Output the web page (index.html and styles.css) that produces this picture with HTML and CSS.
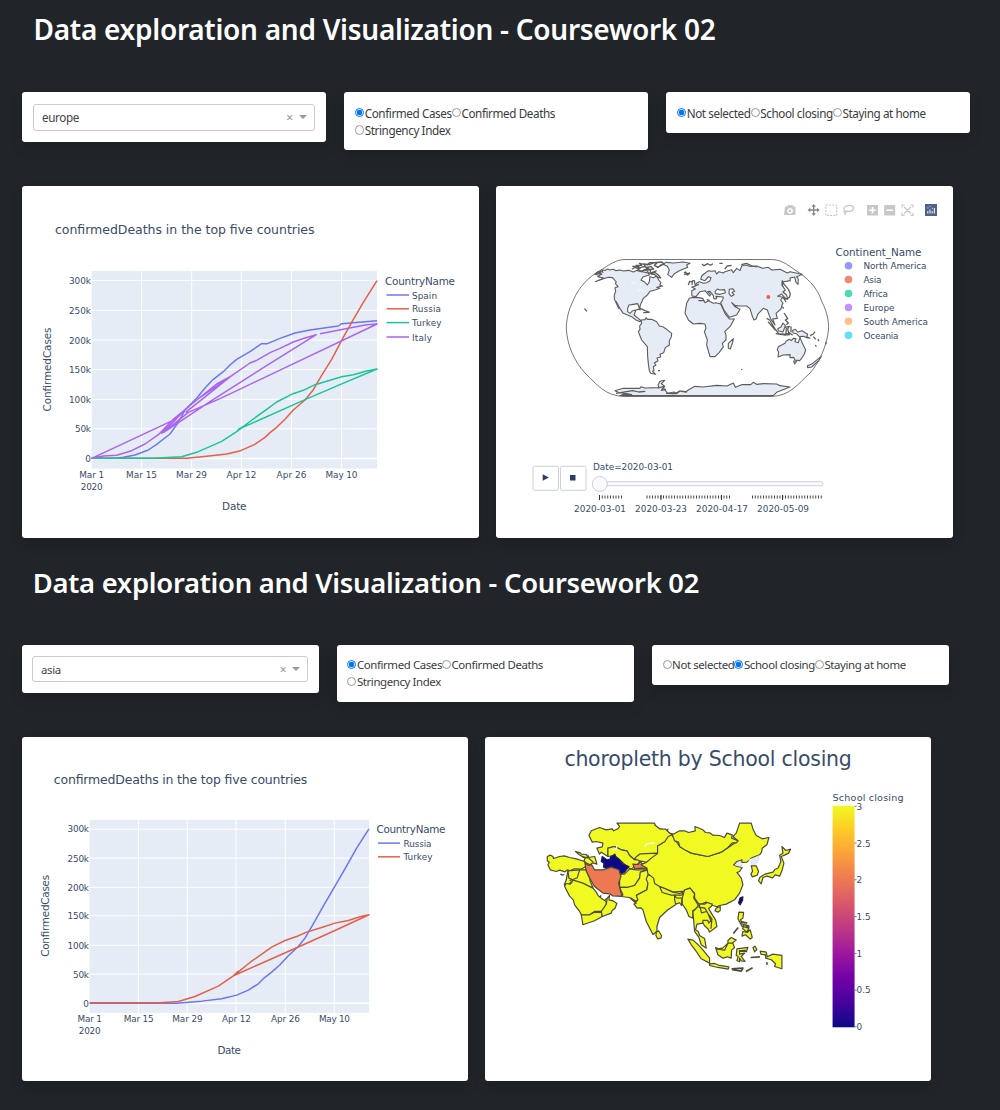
FILE: index.html
```html
<!DOCTYPE html>
<html lang="en">
<head>
<meta charset="utf-8">
<title>Data exploration and Visualization</title>
<link rel="stylesheet" href="styles.css">
</head>
<body>
<section class="dashboard">
  <h1 class="heading">Data exploration and Visualization - Coursework 02</h1>
  <div class="controls">
    <div class="card"><div class="select"><span class="value">europe</span><span class="clear">×</span><span class="arrow"></span></div></div>
    <div class="card options">
      <label><input type="radio" name="m1" checked><span>Confirmed Cases</span></label><label><input type="radio" name="m1"><span>Confirmed Deaths</span></label><label><input type="radio" name="m1"><span>Stringency Index</span></label>
    </div>
    <div class="card options">
      <label><input type="radio" name="p1" checked><span>Not selected</span></label><label><input type="radio" name="p1"><span>School closing</span></label><label><input type="radio" name="p1"><span>Staying at home</span></label>
    </div>
  </div>
  <div class="graphs">
    <div class="card graph">
      <svg viewBox="22 186 456.5 352">
        <rect class="plot" x="91.7" y="271" width="285.3" height="197.5"/>
        <path class="grid" d="M141.5 271V468M191.7 271V468M241.3 271V468M291.5 271V468M341.5 271V468M92 280.5H377M92 310.3H377M92 340H377M92 369.5H377M92 399.3H377M92 428.8H377"/>
        <path class="zero" d="M92 458.5H377"/>
        <g class="series" transform="translate(20 180) scale(.33333)">
          <path class="blue" d="M215 835H285L310 832 345 825 385 810 410 793 450 762 475 727 495 690 530 655 555 624 580 598 610 575 630 555 650 538 690 515 725 491 742 491 780 475 825 459 870 450 955 438 965 431 1000 428 1071 422"/>
          <path class="red" d="M215 835H500L560 829 620 822 662 812 703 794 735 772 750 758 770 742 795 718 820 690 855 660 880 629 905 586 935 538 965 481 995 427 1030 367 1071 302"/>
          <path class="green" d="M215 835H400L485 830 535 815 605 784 650 755 700 717 740 688 770 666 815 643 850 631 885 614 925 602 965 590 1000 584 1040 573 1071 567 960 614 855 659 655 748 670 739"/>
          <path class="purple" d="M215 835 470 716 425 760 495 690M430 758 505 697 600 656 1071 432 1040 434 985 445 900 461M215 835 250 828 290 826 335 812 375 792 415 764 460 718 530 660 590 612 632 589 497 697M530 660 632 589 690 549 710 541 750 518 780 505 820 486 855 474 889 464 735 560 570 665 430 758"/>
        </g>
        <g class="tick end">
          <text x="91" y="284" textLength="22">300k</text><text x="91" y="314" textLength="22">250k</text><text x="91" y="343.5" textLength="22">200k</text><text x="91" y="373" textLength="22">150k</text><text x="91" y="403" textLength="22">100k</text><text x="91" y="432" textLength="16">50k</text><text x="91" y="462">0</text>
        </g>
        <g class="tick mid">
          <text x="91.7" y="478" textLength="25">Mar 1</text><text x="91.7" y="490" textLength="22">2020</text><text x="141.5" y="478" textLength="31">Mar 15</text><text x="191.5" y="478" textLength="31">Mar 29</text><text x="241.5" y="478" textLength="30">Apr 12</text><text x="291.5" y="478" textLength="30">Apr 26</text><text x="341.500" y="478" textLength="32">May 10</text>
        </g>
        <text class="title" x="55" y="234.3" textLength="259.5">confirmedDeaths in the top five countries</text>
        <text class="axis" x="222" y="510" textLength="24.5">Date</text>
        <text class="axis" transform="translate(50.500 411.5) rotate(-90)" textLength="84">ConfirmedCases</text>
        <text class="axis" x="385" y="285" textLength="70">CountryName</text>
        <g class="series"><path class="blue" d="M386.5 295H409"/><path class="red" d="M386.5 308.8H409"/><path class="green" d="M386.5 322.6H409"/><path class="purple" d="M386.5 337H409"/></g>
        <g class="tick"><text x="412" y="298.5" textLength="25">Spain</text><text x="412" y="312.3" textLength="29">Russia</text><text x="412" y="326" textLength="29.5">Turkey</text><text x="412" y="340.5" textLength="20">Italy</text></g>
      </svg>
    </div>
    <div class="card graph">
      <svg viewBox="496 186 456.5 352">
        <g class="tools">
          <path fill-rule="evenodd" d="M785 206.5h2l1-1.5h4.5l1 1.5h2v8.5h-11.500zM790 208a2.900 2.900 0 1 0 .1 0zM790 209.500a1.400 1.400 0 1 1-.1 0z"/>
          <path class="active" d="M813.700 204l2.200 2.700h-1.500v2.600h2.700v-1.500l2.700 2.200-2.700 2.200v-1.500h-2.700v2.600h1.500l-2.200 2.700-2.200-2.700h1.500v-2.600h-2.700v1.500l-2.700-2.200 2.700-2.200v1.500h2.700v-2.600h-1.500z"/>
          <path class="line" stroke-dasharray="2 1.200" d="M825.800 205h10.800v10.300h-10.800z"/>
          <path class="line" d="M845 210.500c-3-2 0-5.200 4.500-5.200s5.500 4.500 1.500 5.800c-3 .9-5-.6-6.500.2-1.500 1 .8 2.400 1.700 1 .5-1-.5-1.500-1.200-1.800m.5 2.500c0 1-.4 1.500-1 2"/>
          <path fill-rule="evenodd" d="M867 205h11v10.500h-11zM871.700 207v2.500h-2.500v1.600h2.500v2.500h1.600v-2.500h2.500v-1.600h-2.500V207z"/>
          <path fill-rule="evenodd" d="M884.200 205h11v10.500h-11zM886.500 209.500v1.600h6.500v-1.600z"/>
          <path class="line" d="M902 207.500v-2.500h2.500M910.500 205h2.500v2.500M913 212.800v2.500h-2.500M904.500 215.300H902v-2.500M904 207l7 6.500M911 207l-7 6.500"/>
          <path class="logo" d="M925 204h12v12h-12z"/><path class="bars" d="M927.800 213.500v-2.500M930 213.500v-4M932.200 213.500v-2.500M934.400 213.500v-5.500M927.500 207.800h.8M929.600 206.500h.8M931.900 208.300h.8"/>
        </g>
        <path class="frame" d="M625 259.500H771.700C780 259.500 787 264 795 270C806 277 817 286 822 302C827 312 828.700 320 828.600 329C827 346 819 363 810 373C798 384 790 396 771 396.500H625C604 396 597 384 585 373C575 362 567 346 566.300 328C566.300 319 569 309 573 301C579 286 590 276 601 270C609 265 616 259.500 625 259.500Z"/>
        <g class="land" transform="translate(560 250) scale(.33333)">
          <path d="M105 72 115 65 112 70 122 73 119 64 129 67 125 60 136 61 143 57 150 60 160 58 168 62 180 60 190 63 206 61 220 66 231 61 246 66 252 60 262 62 268 75 250 80 243 90 255 97 262 105 268 95 270 80 280 83 290 78 296 90 303 98 299 105 308 108 290 112 300 115 285 120 270 124 262 135 250 145 244 158 240 168 240 180 233 161 220 163 207 165 203 175 203 185 210 190 218 182 228 180 222 195 235 205 243 213 240 215 228 210 215 200 190 190 180 176 169 155 176 175 163 147 163 135 167 124 165 113 174 110 166 100 169 96 158 83 145 82 128 87 106 95 131 84 113 80 120 77Z"/>
          <path d="M243 210 255 209 259 203 262 208 275 208 290 215 298 228 308 230 320 238 335 250 334 260 328 272 328 285 316 293 311 308 300 313 302 321 291 324 294 332 283 339 288 345 280 350 282 362 278 364 287 373 272 370 268 362 265 340 263 320 262 290 245 270 235 245 240 238 239 228 245 220Z"/>
          <path d="M307 42 320 37 340 39 370 36 390 40 380 45 383 52 358 62 342 72 335 82 323 74 328 60 322 49Z"/>
          <path class="coast" d="M216 58 225 52 240 55 232 62 246 63 256 58 272 61 270 70 284 67 295 75 302 84 293 82 284 73 272 72M217 49h20l-6 7 20-6 15 3-8 6 23-2-9-8-13 5-8-12 17 2 17-7M227 46h18l-7-6 24 5 7-7 25-1-11 9 12 6 10-9M250 66l20 4 20-8M277 39l28-3 8 6-23 11M372 70l4-4 5 5 8-2-6 6-6-3-4 3M228 180l14-4 13 6 14 5M250 188l19-1M294 362h6M73 176l8 8M105 74l10-9 10 8-8-3 6-10"/>
          <path d="M165 422 190 415 240 415 243 410 255 414 297 413 294 405 300 394 314 391 304 401 313 408 311 415 323 430 342 426 350 431 359 423 377 425 390 417 405 409 430 411 470 406 501 408 520 399 526 412 545 404 572 404 580 397 590 403 610 401 650 402 660 407 690 411 650 427 640 437H180L190 433 215 434 174 427Z"/>
          <path class="coast" d="M168 430l50-8 18 4 20-2M293 414l20-5-9 12 14-3M318 430l26 1 17-8M364 424l17 2"/>
        </g>
        <g class="land" transform="translate(690 250) scale(.33333)">
          <path d="M-2 145-10 160-15 190-8 203-5 210 10 222 30 220 45 222 48 235 43 245 52 270 50 285 60 320 75 320 88 307 100 290 97 280 108 270 108 255 104 245 120 230 133 207 118 207 105 190 92 162 78 158 70 160 55 152 45 158 38 145 20 142 5 143Z"/>
          <path d="M5 122 6 138 18 140 30 125 45 122 58 138 62 134 53 125 60 124 70 137 72 147 80 146 78 139 100 141 98 150 92 158 102 180 118 202 140 195 150 178 135 170 125 158 136 167 150 168 170 168 180 176 187 199 192 210 199 206 203 193 220 175 232 180 238 197 242 207 255 225 248 207 262 205 258 190 273 177 275 168 279 160 272 150 279 142 263 139 275 132 286 145 293 148 290 135 279 126 286 120 276 106 276 96 301 92 300 84 314 81 318 97 324 103 325 88 320 80 337 73 300 65 292 69 270 58 245 60 235 52 218 55 200 48 180 49 165 45 155 48 150 62 140 55 130 68 125 59 105 65 100 69 87 65 80 72 75 62 65 64 55 62 42 72 35 78 32 88 45 92 55 80 63 83 60 92 50 98 40 100 28 95 20 100 15 109 5 111 16 117Z"/>
          <path class="water" d="M75 125 82 117 89 120 104 119 106 128 90 133 76 131ZM118 118 128 116 134 124 126 127 132 134 124 139 117 131Z"/>
          <path d="M265 290 285 280 288 274 298 268 304 272 310 265 318 266 315 275 325 278 330 262 337 280 347 300 343 312 335 325 329 332 315 330 311 322 300 323 300 314 280 315 264 321 266 306 262 300Z"/>
          <path d="M115 280 130 266 128 277 121 297 115 295ZM263 236l10-5 6-12 7 8-7 19-13-3ZM308 241l8-3 7 8 13-4 17 11-3 7 10 5-10-2-9-4-13 1-9-9-10-2ZM311 333h9l-6 9ZM352 347l12-4 15-12 15-12-7 12-22 20-12 2Z"/>
          <path class="coast" d="M6 105 7 93 13 92 16 107 27 103M-5 105l4-11 8 2M36 42l6 5 11-6 8 5 8-5M88 40h10M104 57l8-9 13-2M154 44l15-4 18 8 15 3M278 110l-1-18 6 12 13 15 5 13-3 10-9 5-9-4 8 13M277 170l4 6M282 189l5 7 6 10-7 4 9 9-6 5M230 205l9 5 15 25 12 16 25 2M234 215l22 25M257 251l25 4 18-1M285 232l13-3-5 8 4 15-9-2 1-16M303 229v18M296 247l12 9M360 257l10-5 5-7M370 260l7 8M376 285l3 5M384 267l3 7M408 275v8M155 357v3M25 152h18M50 149l9 2"/>
          <path class="glint" d="M221 103l7-8M96 238l-5 10"/>
          <circle class="dot" cx="235" cy="141" r="6"/>
        </g>
        <path class="glint" d="M631 282l5 2M638 290l5 1M640 285l2-2"/>
        <text class="axis" x="835.5" y="255.500" textLength="86">Continent_Name</text>
        <circle cx="848.500" cy="265.800" r="3.800" fill="#9299fb"/><circle cx="848.500" cy="279.500" r="3.800" fill="#f38775"/><circle cx="848.500" cy="293.500" r="3.800" fill="#4cdab4"/><circle cx="848.500" cy="307.500" r="3.800" fill="#c492fb"/><circle cx="848.500" cy="321.300" r="3.800" fill="#ffbe8c"/><circle cx="848.500" cy="335.300" r="3.800" fill="#5edff6"/>
        <g class="tick"><text x="863.5" y="269.300" textLength="63">North America</text><text x="863.5" y="283" textLength="18">Asia</text><text x="863.5" y="297" textLength="24.500">Africa</text><text x="863.5" y="311" textLength="31">Europe</text><text x="863.5" y="325" textLength="64.500">South America</text><text x="863.5" y="339" textLength="35">Oceania</text></g>
        <rect class="button" x="533" y="466.300" width="25.500" height="24" rx="1.500"/><rect class="button" x="560.500" y="466.300" width="25.500" height="24" rx="1.500"/>
        <path class="navy" d="M542.700 474.200l6.200 3.300-6.200 3.300zM570 475h5.500v5.500H570z"/>
        <rect class="rail" x="594" y="481.700" width="229" height="4" rx="2"/><circle class="grip" cx="599.800" cy="484" r="7.500"/>
        <path class="marks" d="M599 497H623M646.500 497H731M752 497H823"/><path class="long" d="M599.500 495v5M661 495v5M721.500 495v5M782.500 495v5"/>
        <text class="tick" x="593" y="469.500" textLength="80">Date=2020-03-01</text>
        <g class="tick mid"><text x="600" y="511.500" textLength="52">2020-03-01</text><text x="661" y="511.500" textLength="52">2020-03-23</text><text x="722" y="511.500" textLength="52">2020-04-17</text><text x="783" y="511.500" textLength="52">2020-05-09</text></g>
      </svg>
    </div>
  </div>
</section>

<section class="dashboard compact">
  <h1 class="heading">Data exploration and Visualization - Coursework 02</h1>
  <div class="controls">
    <div class="card"><div class="select"><span class="value">asia</span><span class="clear">×</span><span class="arrow"></span></div></div>
    <div class="card options">
      <label><input type="radio" name="m2" checked><span>Confirmed Cases</span></label><label><input type="radio" name="m2"><span>Confirmed Deaths</span></label><label><input type="radio" name="m2"><span>Stringency Index</span></label>
    </div>
    <div class="card options">
      <label><input type="radio" name="p2"><span>Not selected</span></label><label><input type="radio" name="p2" checked><span>School closing</span></label><label><input type="radio" name="p2"><span>Staying at home</span></label>
    </div>
  </div>
  <div class="graphs">
    <div class="card graph">
      <svg viewBox="22 737.200 446.3 344.100">
        <rect class="plot" x="89.500" y="820" width="279.500" height="193"/>
        <path class="grid" d="M138.500 820V1013M187.300 820V1013M236 820V1013M285.300 820V1013M334.300 820V1013M90 829.300H369M90 858.300H369M90 887.500H369M90 916H369M90 945.500H369M90 974.300H369"/>
        <path class="zero" d="M90 1003.500H369"/>
        <g class="series" transform="translate(20 740) scale(.33333)">
          <path class="blue" d="M209 790H470L545 784 605 777 650 766 685 751 715 732 733 714 755 697 780 675 805 648 835 620 855 595 880 552 910 499 945 439 975 387 1010 325 1047 267"/>
          <path class="red" d="M209 789H420L475 785 525 770 595 739 640 708 690 668 735 636 755 622 795 602 830 590 860 577 905 563 945 550 985 542 1020 531 1047 525 945 572 830 624 640 708 655 694"/>
        </g>
        <g class="tick end"><text x="89" y="832.500" textLength="21.500">300k</text><text x="89" y="862" textLength="21.500">250k</text><text x="89" y="891" textLength="21.500">200k</text><text x="89" y="919.500" textLength="21.500">150k</text><text x="89" y="949" textLength="21.500">100k</text><text x="89" y="978" textLength="16">50k</text><text x="89" y="1007">0</text></g>
        <g class="tick mid"><text x="89.700" y="1022" textLength="24.500">Mar 1</text><text x="89.700" y="1034" textLength="22">2020</text><text x="138.700" y="1022" textLength="30">Mar 15</text><text x="187.500" y="1022" textLength="30.500">Mar 29</text><text x="236.500" y="1022" textLength="29">Apr 12</text><text x="285.500" y="1022" textLength="29">Apr 26</text><text x="334.500" y="1022" textLength="31">May 10</text></g>
        <text class="title" x="53.800" y="784" textLength="253.500">confirmedDeaths in the top five countries</text>
        <text class="axis" x="217.500" y="1053.800" textLength="23.500">Date</text>
        <text class="axis" transform="translate(49.500 957) rotate(-90)" textLength="82">ConfirmedCases</text>
        <text class="axis" x="376.500" y="833.300" textLength="69">CountryName</text>
        <g class="series"><path class="blue" d="M378 843.300H400"/><path class="red" d="M378 857H400"/></g>
        <g class="tick"><text x="403.500" y="847" textLength="28">Russia</text><text x="403.500" y="860.500" textLength="29">Turkey</text></g>
      </svg>
    </div>
    <div class="card graph">
      <svg viewBox="485.400 737.200 446.300 344.100">
        <defs><linearGradient id="plasma" x1="0" y1="0" x2="0" y2="1"><stop offset="0" stop-color="#f0f921"/><stop offset=".111" stop-color="#fdca26"/><stop offset=".222" stop-color="#fb9f3a"/><stop offset=".333" stop-color="#ed7953"/><stop offset=".444" stop-color="#d8576b"/><stop offset=".556" stop-color="#bd3786"/><stop offset=".667" stop-color="#9c179e"/><stop offset=".778" stop-color="#7201a8"/><stop offset=".889" stop-color="#46039f"/><stop offset="1" stop-color="#0d0887"/></linearGradient></defs>
        <text class="big" x="564.800" y="766.300" textLength="287.500">choropleth by School closing</text>
        <g class="region" transform="translate(540 815) scale(.33333)">
          <path d="M232 25H345L350 45 365 42 385 58 398 56 380 72 370 70 375 82 355 92 354 118 300 120 285 135 270 122 262 108 245 105 225 95 205 100V125L185 112 180 118 172 100 188 96 190 85 170 80 158 82 148 62 155 48 180 38 200 45 218 42 222 48 235 42 240 35Z"/>
          <path d="M205 125V100L225 95 245 105 262 108 270 122 285 135 302 133 297 145 275 163 268 160 240 135 225 122Z"/>
          <path d="M290 126 302 117 352 115 350 128 333 132 325 143 300 138 285 132Z"/>
          <path class="navy-fill" d="M188 125 202 135 211 133 213 126 226 118 228 126 240 135 250 148 268 155 255 172 244 178 225 160 205 162 192 157 193 145 185 140Z"/>
          <path class="salmon" d="M280 148 296 149 302 140 308 147 318 145 323 163 305 160 285 162Z"/>
          <path d="M240 178 255 178 270 162 290 165 325 165 305 172 300 190 285 212 262 218 240 218Z"/>
          <path d="M245 245 250 240 240 218 262 218 285 212 300 190 302 172 325 165 345 185 325 205 322 225 292 240 295 255 285 262 270 248Z"/>
          <path d="M275 250 290 260 295 255 290 242 322 225 325 205 320 193 325 180 345 185 350 205 380 225 420 240 440 235 432 265 408 255 408 270 385 285 360 308 352 335 352 350 340 359 320 320 310 285 304 279 293 280 283 268 290 265Z"/>
          <path d="M350 352 357 348 366 363 364 370 354 372 349 362Z"/>
          <path class="salmon" d="M135 145 148 152 155 148 165 165 190 165 215 157 238 165 244 185 237 205 247 245 219 243 210 237 190 235 165 215 156 200 150 190 140 170Z"/>
          <path d="M23 125 32 121 40 125 42 131 60 125 74 123 90 128 110 132 135 140 138 155 125 163 105 162 90 168 84 165 76 171 60 166 50 170 32 165 25 150 29 143 23 137Z"/>
          <path d="M108 110 120 113 126 118 140 119 145 128 165 125 169 137 172 148 160 144 151 150 141 145 133 138 137 130 119 120Z"/>
          <path d="M85 168 120 165 138 165 150 190 152 200 160 217 149 217 120 204 94 202 79 218 74 210 80 195Z"/>
          <path d="M75 215 79 206 92 208 101 196 130 205 160 220 170 232 176 243 185 250 200 260 200 275 185 290 165 290 150 300 127 302 120 290 105 270 101 255 90 244Z"/>
          <path d="M125 300 150 300 165 292 187 293 188 305 165 318 130 330Z"/><path d="M200 268 185 290 188 305 215 295 218 286 226 281 232 266 220 258 208 255 210 242 203 250Z"/>
          <path class="border" d="M85 168 88 190 101 196M120 165 113 189 90 198M62 178l7 3 5-3M182 250l2-9M194 258l8-8M144 120l5 12 12 10M128 126l22 4"/>
        </g>
        <g class="region" transform="translate(660 815) scale(.33333)">
          <path d="M25 43 20 48 38 60 60 95 95 115 145 125 185 112 215 92 235 78 220 65 230 55 240 25H275L281 45 290 62 308 72 328 68 322 90 308 100 306 112 300 120 275 130 262 142 247 143 247 135 232 140 222 150 232 155 248 158 240 170 232 173 245 190 250 210 240 235 225 255 200 268 180 272 172 276 160 272 140 262 120 270 105 250 105 235 90 220 70 230 40 232 0 215-15 206-18 190-35 177-38 160-56 150-40 143-25 130-6 116-6 93 15 80 14 68Z"/>
          <path d="M38 60 60 48 75 48 87 53 107 48 106 35 130 45 138 53 150 54 160 61 180 62 195 68 202 55 218 60 216 70 235 78 230 84 218 84 205 98 185 112 145 125 120 120 95 115 75 105 60 95 57 82 45 78Z"/>
          <path class="fill-only" d="M-30 46-15 30 0 42 18 43 28 53 38 60 26 65 16 80-5 93-6 68 0 62-20 55Z"/>
          <path class="border" d="M-15 30 0 42 18 43 28 53 38 60 26 65 16 80-5 93"/>
          <path d="M0 215 20 223 40 232 60 236 70 232 67 241 35 241 8 233Z"/>
          <path d="M45 241 50 249 67 250 66 272 60 264 48 268 45 254Z"/><path d="M68 250 75 225 92 220 105 238 102 249 115 270 117 280 100 287 100 310 88 305 80 285 68 268Z"/>
          <path d="M100 290 115 275 120 267 135 268 142 263 158 268 155 275 147 281 157 298 168 315 172 335 150 352 146 343 135 333 130 325 112 328 108 345 116 350 120 362 135 371 140 400 125 390 118 368 105 350 103 325Z"/>
          <path class="border" d="M117 277 136 280 145 296 154 318 147 325 145 317 130 317 130 325M119 270 126 294 141 290 157 313 154 342"/>
          <path d="M85 373 100 376 116 390 130 405 150 430 150 445 125 432 110 410 95 390ZM150 447 165 446 180 452 208 456 206 463 175 458 150 452Z"/>
          <path d="M168 398 177 402 190 400 205 385 205 377 215 368 230 376 219 384 225 398 216 406 215 430 204 426 190 430 175 420ZM170 402 195 406 205 385 219 384"/>
          <path d="M232 402 265 398 262 406 240 408 240 418 255 415 245 425 256 440 245 438 240 430 240 441 232 438 236 425 230 422ZM302 409 320 412 323 426 340 418 367 422V462L345 455 348 447 335 435 318 430 318 420 304 418Z"/>
          <path d="M238 292 252 293 250 310 243 315 248 327 268 333 268 340 247 334 235 312ZM250 350 263 353 272 345 278 368 272 373 258 360 247 364ZM254 328l14 12-6 12-13-11ZM280 398l6-4 6 10-7 7ZM170 280 182 275 182 287 175 292 166 288Z"/>
          <path class="island" d="M221 356l15-18M273 428l28-2M216 462l34-2-5 9-27-4M259 470l20-11M322 442v8M243 320l20 5M238 409l25 1"/>
          <path class="navy-fill" d="M237 264l4-14 9-4-1 10-7 14Z"/>
          <path class="pale" d="M265 135 285 128 298 122 298 135 288 150 275 155 275 143ZM226 151l16-13 6 16Z"/>
          <path d="M275 153 290 153 297 170 293 181 278 186 274 178 279 169ZM367 95 379 107 393 103 387 115 375 121 365 125 373 145 367 168 360 184 347 180 339 189 323 184 310 188 305 207 297 198 301 187 316 178 340 172 345 165 356 159 364 140 360 121 370 115Z"/>
        </g>
        <path class="glint thick" d="M613 850l4-1v-4M645 847l2-3 8-1"/>
        <text class="cap" x="833" y="801" textLength="71">School closing</text>
        <rect x="833" y="806" width="22" height="221.500" fill="url(#plasma)"/>
        <path class="scale-line" d="M855 806.500h2M855 843.200h2M855 880h2M855 916.800h2M855 953.600h2M855 990.400h2M855 1027h2"/>
        <g class="tick"><text x="857" y="810">3</text><text x="857" y="846.800" textLength="14">2.5</text><text x="857" y="883.500">2</text><text x="857" y="920.300" textLength="14">1.5</text><text x="857" y="957">1</text><text x="857" y="993.700" textLength="14">0.5</text><text x="857" y="1030.500">0</text></g>
      </svg>
    </div>
  </div>
</section>
</body>
</html>
```
FILE: styles.css
```css
* { box-sizing: border-box; }
body { margin: 0; background: #212529; width: 1000px; height: 1110px; overflow: hidden; font-family: "Noto Sans", "Open Sans", sans-serif; }

.dashboard { --s: 1; height: calc(554.7px * var(--s)); padding-left: calc(22px * var(--s)); }
.compact { --s: .9776; }
.heading { margin: 0; height: calc(92px * var(--s)); padding: calc(8.6px * var(--s)) 0 0 calc(11.5px * var(--s)); color: #fff; font-size: calc(28px * var(--s)); font-weight: 600; line-height: calc(40px * var(--s)); letter-spacing: calc(-.27px * var(--s)); white-space: nowrap; }

.controls { display: flex; align-items: flex-start; gap: calc(18px * var(--s)); height: calc(94px * var(--s)); }
.compact .controls { gap: 18px; }
.card { background: #fff; border-radius: 3px; box-shadow: 0 6px 12px rgba(0, 0, 0, .16); }
.controls .card { width: calc(304px * var(--s)); padding: calc(12px * var(--s)) calc(11px * var(--s)) calc(11.5px * var(--s)); }
.select { display: flex; align-items: center; height: calc(26.5px * var(--s)); border: 1px solid #ccc; border-radius: 3px; padding: 0 calc(7px * var(--s)) 0 calc(8px * var(--s)); color: #444; font-size: calc(11.7px * var(--s)); letter-spacing: -.4px; }
.value { flex: 1; }
.clear { color: #999; font-size: calc(13px * var(--s)); margin-right: calc(6px * var(--s)); }
.arrow { border: solid transparent; border-top-color: #999; border-width: 4px 4px 0; }

.options { display: flex; flex-wrap: wrap; }
.options label { display: flex; align-items: center; height: calc(17.4px * var(--s)); color: #383c40; font-size: calc(11.7px * var(--s)); letter-spacing: calc(-.4px * var(--s)); white-space: nowrap; }
.options input { appearance: none; width: calc(9.2px * var(--s)); height: calc(9.2px * var(--s)); margin: 0 .5px 0 0; border: 1px solid #999; border-radius: 50%; background: #fff; }
.options input:checked { border-color: #0075ff; background: radial-gradient(circle, #0075ff 0 2.600px, #fff 3.100px); }

.graphs { display: flex; gap: calc(17.5px * var(--s)); }
.graph { width: calc(456.5px * var(--s)); height: calc(352px * var(--s)); }
.graph svg { display: block; width: 100%; height: 100%; }

svg text { font-family: "DejaVu Sans", Verdana, sans-serif; fill: #384c69; }
.tick, .tick text { font-size: 8.900px; }
.mid text { text-anchor: middle; }
.end text { text-anchor: end; }
.axis { font-size: 10.400px; }
.cap { font-size: 9.600px; }
.title { font-size: 12.500px; }
.big { font-size: 20.500px; }
.plot { fill: #e5ecf6; }
.grid, .zero { stroke: #fff; fill: none; }
.zero { stroke-width: 1.600px; }
.series path { fill: none; stroke-width: 1.500px; stroke-linejoin: round; vector-effect: non-scaling-stroke; }
.blue { stroke: #6c76f2; }
.red { stroke: #e65f49; }
.green { stroke: #1cc598; }
.purple { stroke: #ab63f0; }

.tools path { fill: #c6c8ca; }
.tools .active { fill: #85888d; }
.tools .line { fill: none; stroke: #c6c8ca; stroke-width: 1.200px; }
.tools .logo { fill: #506387; }
.tools .bars { fill: none; stroke: #d8e4f4; stroke-width: 1.200px; }
.frame { fill: #fff; stroke: #666; stroke-width: .9px; }
.land path { fill: #e5ecf6; stroke: #5c5c5c; stroke-width: 3.300px; stroke-linejoin: round; }
.land .coast { fill: none; stroke-width: 3.800px; }
.land .water { fill: #fff; }
.land .dot { fill: #ef6048; }
.glint, .land .glint { fill: none; stroke: #fff; stroke-width: .8px; }
.thick { stroke-width: 1.200px; }
.button { fill: #fff; stroke: #cbd2dd; }
.navy { fill: #2a3f5f; }
.rail { fill: #f8fafc; stroke: #cbd2dd; }
.grip { fill: #f8fafc; stroke: #cbd2dd; }
.marks { stroke: #444; stroke-width: 3.200px; stroke-dasharray: 1 1.750; }
.long { stroke: #333; fill: none; }
.region path { fill: #f0f921; stroke: #4c4c38; stroke-width: 3.600px; stroke-linejoin: round; }
.region .border { fill: none; }
.region .fill-only { stroke: none; }
.region .navy-fill { fill: #0d0887; stroke: #202050; }
.region .salmon { fill: #ed7953; }
.region .pale { fill: #e5ecf6; stroke: #bbc4d3; stroke-width: 1px; }
.region .island { fill: none; stroke-width: 5px; }
.scale-line { stroke: #555; stroke-width: .8px; }
```
